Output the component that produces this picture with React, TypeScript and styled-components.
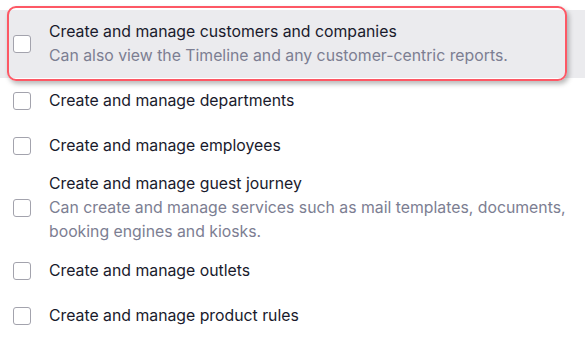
import React from "react";
import styled, { createGlobalStyle } from "styled-components";

const Global = createGlobalStyle`
  html, body { margin: 0; padding: 0; background: #ffffff; }
  body { font-family: Inter, "Noto Sans", sans-serif; }
`;

const List = styled.div`
  display: flex;
  flex-direction: column;
  padding-top: 10px;
  width: 585px;
`;

const Row = styled.label<{ $active?: boolean }>`
  position: relative;
  display: flex;
  align-items: center;
  gap: 18px;
  min-height: 45px;
  box-sizing: border-box;
  padding: ${(p) => (p.$active ? "10px 10px 10px 13px" : "4px 10px 4px 13px")};
  background: ${(p) => (p.$active ? "#ebebee" : "transparent")};
  cursor: pointer;
`;

const Box = styled.span`
  flex: none;
  width: 18px;
  height: 18px;
  box-sizing: border-box;
  border: 1px solid #a3a3ad;
  border-radius: 3px;
  background: #ffffff;
`;

const Texts = styled.div`
  display: flex;
  flex-direction: column;
`;

const Title = styled.div`
  font-size: 15.8px;
  line-height: 24px;
  color: #191a2c;
`;

const Desc = styled.div`
  font-size: 15.8px;
  line-height: 24px;
  color: #7c7e92;
`;

const Highlight = styled.div`
  position: absolute;
  left: 7px;
  top: -4px;
  width: 560px;
  height: 75px;
  box-sizing: border-box;
  border: 2.5px solid #fd5865;
  border-radius: 9px;
  box-shadow: 2px 3px 5px rgba(0, 0, 0, 0.28);
  pointer-events: none;
`;

type Item = { title: string; desc?: string; active?: boolean };

const items: Item[] = [
  {
    title: "Create and manage customers and companies",
    desc: "Can also view the Timeline and any customer-centric reports.",
    active: true,
  },
  { title: "Create and manage departments" },
  { title: "Create and manage employees" },
  {
    title: "Create and manage guest journey",
    desc: "Can create and manage services such as mail templates, documents, booking engines and kiosks.",
  },
  { title: "Create and manage outlets" },
  { title: "Create and manage product rules" },
];

export default function App() {
  return (
    <>
      <Global />
      <List>
        {items.map((it) => (
          <Row key={it.title} $active={it.active}>
            <Box />
            <Texts>
              <Title>{it.title}</Title>
              {it.desc && <Desc>{it.desc}</Desc>}
            </Texts>
            {it.active && <Highlight />}
          </Row>
        ))}
      </List>
    </>
  );
}
